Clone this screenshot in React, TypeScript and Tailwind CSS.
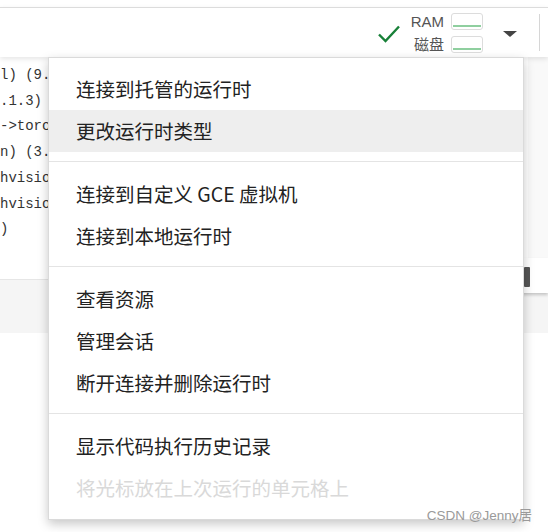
import { Fragment } from 'react';

const codeLines = ['l) (9.0.0)', '.1.3)', '->torch', 'n) (3.7.4)', 'hvision', 'hvision', ')'];

type Item = { label: string; active?: boolean; disabled?: boolean };

const groups: Item[][] = [
  [{ label: '连接到托管的运行时' }, { label: '更改运行时类型', active: true }],
  [{ label: '连接到自定义 GCE 虚拟机' }, { label: '连接到本地运行时' }],
  [{ label: '查看资源' }, { label: '管理会话' }, { label: '断开连接并删除运行时' }],
  [{ label: '显示代码执行历史记录' }, { label: '将光标放在上次运行的单元格上', disabled: true }],
];

function UsageBox() {
  return (
    <div className="relative h-[17px] w-[32px] rounded-[3px] border border-[#dcdcdc] bg-white">
      <div className="absolute bottom-[2px] left-[1px] right-[1px] h-[2px] bg-[#8fcf9f]" />
    </div>
  );
}

function Toolbar() {
  return (
    <header className="relative z-10 mt-[7px] flex h-[50px] items-center justify-end border-t border-[#dcdcdc] bg-white pr-[8px] shadow-[0_2px_5px_rgba(0,0,0,0.10)]">
      <svg width="24" height="20" viewBox="0 0 24 20" className="mr-[10px] mt-[2px]">
        <path d="M2 10.5 L8.5 17 L22 2.5" fill="none" stroke="#188038" strokeWidth="2.4" />
      </svg>
      <div className="flex flex-col gap-[6px] font-['Liberation_Sans','Noto_Sans_CJK_SC',sans-serif] text-[15px] leading-[17px] text-[#555]">
        <div className="flex items-center justify-end gap-[7px]">
          <span>RAM</span>
          <UsageBox />
        </div>
        <div className="flex items-center justify-end gap-[7px]">
          <span>磁盘</span>
          <UsageBox />
        </div>
      </div>
      <div className="ml-[20px] mr-[22px] mt-[2px] h-0 w-0 border-x-[7px] border-t-[6px] border-x-transparent border-t-[#444]" />
      <div className="h-[37px] w-px bg-[#d6d6d6]" />
    </header>
  );
}

function RuntimeMenu() {
  return (
    <div className="absolute left-[48px] top-[57px] z-20 w-[476px] border border-[#dadada] bg-white py-[10px] font-['Noto_Sans_CJK_SC',sans-serif] text-[19.5px] shadow-[0_4px_10px_rgba(0,0,0,0.22)]">
      {groups.map((group, gi) => (
        <Fragment key={gi}>
          {gi > 0 && <div className="mb-[11px] mt-[9px] h-px bg-[#e4e4e4]" />}
          {group.map((item) => (
            <div
              key={item.label}
              className={
                'flex h-[42px] items-center pl-[27px] ' +
                (item.active ? 'bg-[#eeeeee] ' : '') +
                (item.disabled ? 'text-[#d9d9d9]' : 'text-[#222]')
              }
            >
              {item.label}
            </div>
          ))}
        </Fragment>
      ))}
    </div>
  );
}

export default function App() {
  return (
    <div className="relative h-[532px] w-[548px] overflow-hidden bg-white">
      <Toolbar />
      <div className="flex">
        <div className="flex-1 pt-[6px] font-['Liberation_Mono',monospace] text-[14px] leading-[25.7px] text-[#333]">
          {codeLines.map((line, i) => (
            <div key={i} className="whitespace-pre">
              {line}
            </div>
          ))}
        </div>
        <div className="h-[201px] w-[20px] bg-[#f9f9f9]" />
      </div>
      <div className="relative mt-[21px] h-[54px] border-t border-[#e6e6e6] bg-[#f5f5f5]">
        <div className="absolute right-0 top-[-22px] flex h-[35px] w-[90px] items-center bg-white pl-[66px] shadow-[0_2px_3px_rgba(0,0,0,0.2)]">
          <div className="mt-[2px] h-[20px] w-[6px] rounded-[1px] bg-[#555]" />
        </div>
      </div>
      <RuntimeMenu />
      <div className="absolute right-[16px] top-[506px] z-30 font-['Liberation_Sans','Noto_Sans_CJK_SC',sans-serif] text-[13.5px] text-[#9a9a9a]">
        CSDN @Jenny居
      </div>
    </div>
  );
}
